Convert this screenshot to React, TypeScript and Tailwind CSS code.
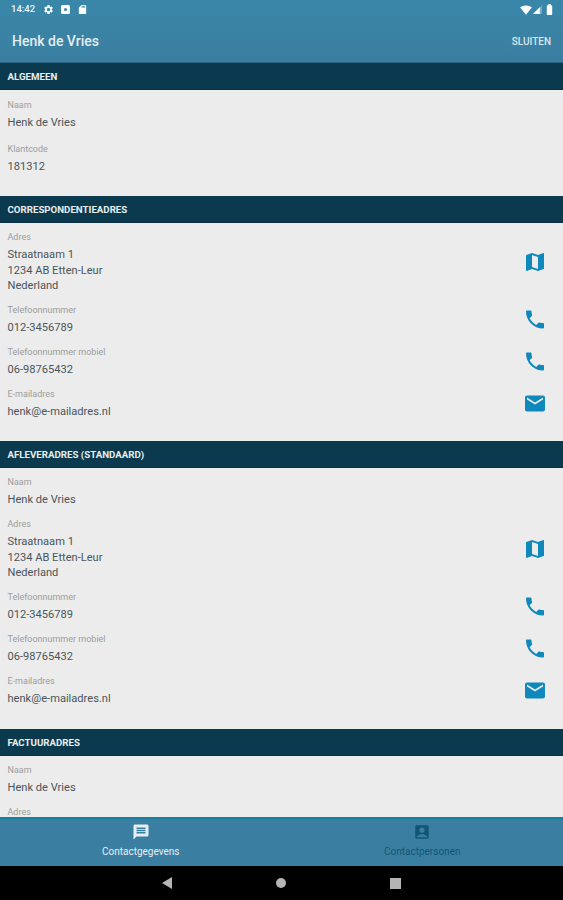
import React from 'react'
import {
  MdAccountBox,
  MdBatteryFull,
  MdEmail,
  MdLocalPhone,
  MdMap,
  MdMessage,
  MdSdCard,
  MdSettings,
  MdSignalCellular3Bar,
  MdSignalWifi4Bar,
} from 'react-icons/md'

const adres = ['Straatnaam 1', '1234 AB Etten-Leur', 'Nederland']

const Section = ({ title }: { title: string }) => (
  <div className="h-[27px] pt-[2px] flex items-center pl-[7.5px] pr-2 bg-[#0b3a4e] border-b border-[#0a2f44] text-[9.7px] font-bold text-[#e8eef0] shrink-0">
    {title}
  </div>
)

const Field = ({ label, lines, icon }: { label: string; lines: string[]; icon?: React.ReactNode }) => (
  <div className="pl-[7.5px] pr-[16px] flex items-center justify-between">
    <div>
      <div className="h-[14px] leading-[14px] text-[9px] text-[#9b9d9e]">{label}</div>
      {lines.length > 0 && (
        <div className="mt-[3px] text-[11.1px] leading-[15.5px] text-[#4b5559]">
          {lines.map((l) => (
            <div key={l}>{l}</div>
          ))}
        </div>
      )}
    </div>
    {icon && <div className="text-[#0f88bc] w-[24px] flex justify-center">{icon}</div>}
  </div>
)

const ContactBlock = () => (
  <>
    <Field label="Adres" lines={adres} icon={<MdMap size={26} />} />
    <Field label="Telefoonnummer" lines={['012-3456789']} icon={<MdLocalPhone size={27} />} />
    <Field label="Telefoonnummer mobiel" lines={['06-98765432']} icon={<MdLocalPhone size={27} />} />
    <Field label="E-mailadres" lines={['henk@e-mailadres.nl']} icon={<MdEmail size={27} />} />
  </>
)

export default function App() {
  return (
    <div className="w-[563px] h-[900px] flex flex-col overflow-hidden bg-[#ececec] font-['Roboto',sans-serif]">
      <div className="h-[17px] pt-[2px] bg-[#3a86a9] flex items-center justify-between pl-[11px] pr-[7px] text-white shrink-0">
        <div className="flex items-center gap-[6px]">
          <span className="text-[9.5px] font-medium mr-[2px] text-[#eef5f8]">14:42</span>
          <MdSettings size={11} />
          <div className="w-[11px] flex justify-center">
            <div className="w-[9px] h-[9px] rounded-[1.5px] bg-white flex items-center justify-center">
              <div className="w-[3px] h-[3px] rounded-full bg-[#3a86a9]" />
            </div>
          </div>
          <MdSdCard size={11} />
        </div>
        <div className="flex items-center">
          <MdSignalWifi4Bar size={12} />
          <MdSignalCellular3Bar size={11} />
          <MdBatteryFull size={13} />
        </div>
      </div>

      <div className="h-[45px] pt-1 bg-gradient-to-b from-[#3b84a6] to-[#3a7fa2] flex items-center justify-between pl-3 pr-3 shrink-0">
        <span className="text-[14px] font-medium text-[#e3edf1]">Henk de Vries</span>
        <span className="text-[10px] font-medium text-[#dbe6ec]">SLUITEN</span>
      </div>
      <div className="h-px bg-[#2a6684] shrink-0" />

      <main className="flex-1 overflow-hidden flex flex-col">
        <Section title="ALGEMEEN" />
        <div className="h-[106px] pt-2 flex flex-col gap-[11px] shrink-0">
          <Field label="Naam" lines={['Henk de Vries']} />
          <Field label="Klantcode" lines={['181312']} />
        </div>

        <Section title="CORRESPONDENTIEADRES" />
        <div className="h-[218px] pt-[7px] flex flex-col gap-[9.5px] shrink-0">
          <ContactBlock />
        </div>

        <Section title="AFLEVERADRES (STANDAARD)" />
        <div className="h-[261px] pt-[7px] flex flex-col gap-[9.5px] shrink-0">
          <Field label="Naam" lines={['Henk de Vries']} />
          <ContactBlock />
        </div>

        <Section title="FACTUURADRES" />
        <div className="pt-[7px] flex flex-col gap-[9.5px]">
          <Field label="Naam" lines={['Henk de Vries']} />
          <Field label="Adres" lines={[]} />
        </div>
      </main>

      <nav className="h-[49px] bg-[#3a7fa2] border-t-2 border-[#16809e] flex shrink-0">
        <div className="flex-1 flex flex-col items-center pt-[4px] text-[#e6eef2]">
          <MdMessage size={18} />
          <span className="mt-[5px] text-[10px] leading-[12px]">Contactgegevens</span>
        </div>
        <div className="flex-1 flex flex-col items-center pt-[4px] text-[#125674]">
          <MdAccountBox size={18} />
          <span className="mt-[5px] text-[10px] leading-[12px]">Contactpersonen</span>
        </div>
      </nav>

      <div className="h-[34px] bg-black flex items-center pl-[162px] gap-[104px] shrink-0">
        <div className="w-0 h-0 border-y-[6px] border-y-transparent border-r-[10px] border-r-[#b5b5b5]" />
        <div className="w-[10px] h-[10px] rounded-full bg-[#b5b5b5]" />
        <div className="w-[11px] h-[11px] bg-[#b5b5b5]" />
      </div>
    </div>
  )
}
